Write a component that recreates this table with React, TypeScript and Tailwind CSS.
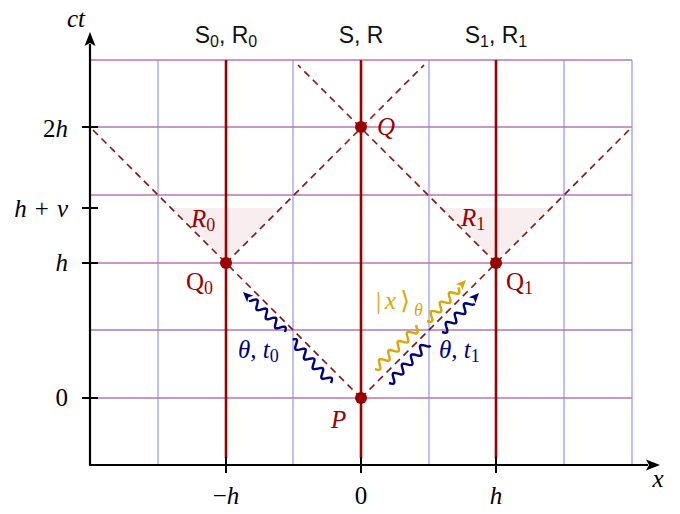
import React from "react";

// spacetime diagram geometry (pixels)
const X0 = 90;
const Y0 = 465;
const gridX = [158, 226, 293, 361, 429, 496, 564, 632];
const gridY = [60, 127, 195, 263, 330, 398];
const worldLines = [226, 361, 496];

const RED = "#990000";
const DASH = "#8b1111";
const NAVY = "#00007a";
const GOLD = "#d9a706";
const MATH = "'Liberation Serif', 'DejaVu Serif', serif";
const SANS = "'Liberation Sans', Arial, sans-serif";

// squiggly photon path between two points
function wave(x1: number, y1: number, x2: number, y2: number, amp = 3.8, len = 13) {
  const dx = x2 - x1;
  const dy = y2 - y1;
  const d = Math.hypot(dx, dy);
  const ux = dx / d;
  const uy = dy / d;
  const nx = -uy;
  const ny = ux;
  const pts: string[] = [];
  const steps = Math.round(d);
  for (let i = 0; i <= steps; i++) {
    const s = (i / steps) * d;
    const o = amp * Math.sin((s / len) * Math.PI * 2);
    pts.push(`${(x1 + ux * s + nx * o).toFixed(2)},${(y1 + uy * s + ny * o).toFixed(2)}`);
  }
  return "M" + pts.join(" L");
}

function head(tx: number, ty: number, fx: number, fy: number, size = 10) {
  const dx = tx - fx;
  const dy = ty - fy;
  const d = Math.hypot(dx, dy);
  const ux = dx / d;
  const uy = dy / d;
  const bx = tx - ux * size;
  const by = ty - uy * size;
  const w = size * 0.45;
  return `M${tx},${ty} L${bx - uy * w},${by + ux * w} L${bx + ux * 2.5},${by + uy * 2.5} L${bx + uy * w},${by - ux * w} Z`;
}

const Photon: React.FC<{ segs: number[][]; tip: number[]; color: string }> = ({ segs, tip, color }) => {
  const last = segs[segs.length - 1];
  return (
    <g>
      {segs.map((s, i) => (
        <path key={i} d={wave(s[0], s[1], s[2], s[3])} fill="none" stroke={color} strokeWidth={2.4} strokeLinejoin="round" />
      ))}
      <path d={head(tip[0], tip[1], last[0], last[1])} fill={color} />
    </g>
  );
};

const Dot: React.FC<{ x: number; y: number }> = ({ x, y }) => <circle cx={x} cy={y} r={6} fill={RED} />;

export default function App() {
  return (
    <div className="w-[680px] h-[514px] bg-white overflow-hidden">
      <svg width={680} height={514} viewBox="0 0 680 514" className="block">
        {/* light cone wedges */}
        <polygon points="172,208 280,208 226,262" fill="#f8eef0" />
        <polygon points="442,208 550,208 496,262" fill="#f8eef0" />

        {/* grid */}
        {gridX.map((x) => (
          <line key={"v" + x} x1={x} y1={60} x2={x} y2={Y0} stroke="#9d9df0" strokeWidth={1.3} />
        ))}
        {gridY.map((y) => (
          <line key={"h" + y} x1={X0} y1={y} x2={632} y2={y} stroke="#b477b4" strokeWidth={1.3} />
        ))}

        {/* world lines */}
        {worldLines.map((x) => (
          <line key={"w" + x} x1={x} y1={60} x2={x} y2={458} stroke={RED} strokeWidth={2.6} />
        ))}

        {/* light rays */}
        <g stroke={DASH} strokeWidth={1.6} strokeDasharray="7 5" fill="none">
          <line x1={361} y1={398} x2={91} y2={128} />
          <line x1={361} y1={398} x2={631} y2={128} />
          <line x1={226} y1={263} x2={424} y2={65} />
          <line x1={496} y1={263} x2={298} y2={65} />
        </g>

        {/* axes */}
        <line x1={X0} y1={Y0} x2={X0} y2={44} stroke="#000" strokeWidth={2.2} />
        <line x1={X0 - 1} y1={Y0} x2={648} y2={Y0} stroke="#000" strokeWidth={2.2} />
        <path d="M90,32 L95.5,46 L90,43 L84.5,46 Z" fill="#000" />
        <path d="M660,465 L646,459.5 L649,465 L646,470.5 Z" fill="#000" />
        {[127, 208, 263, 398].map((y) => (
          <line key={"ty" + y} x1={82} y1={y} x2={98} y2={y} stroke="#000" strokeWidth={2} />
        ))}
        {worldLines.map((x) => (
          <line key={"tx" + x} x1={x} y1={457} x2={x} y2={473} stroke="#000" strokeWidth={2} />
        ))}

        {/* events */}
        <Dot x={226} y={263} />
        <Dot x={361} y={127} />
        <Dot x={496} y={263} />
        <Dot x={361} y={398} />

        {/* photons */}
        <Photon segs={[[331, 383, 292, 340], [285, 332, 251, 299]]} tip={[243, 292]} color={NAVY} />
        <Photon segs={[[375, 369, 418, 327], [427, 321, 459, 288]]} tip={[466, 280]} color={GOLD} />
        <Photon segs={[[389, 383, 428, 343], [442, 332, 472, 301]]} tip={[479, 293]} color={NAVY} />

        {/* axis labels */}
        <g fontFamily={MATH} fontSize={25} fill="#000">
          <text x={76} y={27} textAnchor="middle" fontStyle="italic">ct</text>
          <text x={68} y={137} textAnchor="end">
            2<tspan fontStyle="italic">h</tspan>
          </text>
          <text x={68} y={217} textAnchor="end">
            <tspan fontStyle="italic">h</tspan>
            <tspan dx={8}>+</tspan>
            <tspan dx={8} fontStyle="italic">v</tspan>
          </text>
          <text x={68} y={271} textAnchor="end" fontStyle="italic">h</text>
          <text x={68} y={406} textAnchor="end">0</text>
          <text x={226} y={504} textAnchor="middle">
            −<tspan fontStyle="italic">h</tspan>
          </text>
          <text x={361} y={504} textAnchor="middle">0</text>
          <text x={496} y={504} textAnchor="middle" fontStyle="italic">h</text>
          <text x={658} y={487} textAnchor="middle" fontStyle="italic">x</text>
        </g>

        {/* observer labels */}
        <g fontFamily={SANS} fontSize={23} fill="#111">
          <text x={226} y={43} textAnchor="middle">
            S<tspan fontSize={16} dy={4}>0</tspan>
            <tspan dy={-4}>, R</tspan>
            <tspan fontSize={16} dy={4}>0</tspan>
          </text>
          <text x={361} y={43} textAnchor="middle">S, R</text>
          <text x={496} y={43} textAnchor="middle">
            S<tspan fontSize={16} dy={4}>1</tspan>
            <tspan dy={-4}>, R</tspan>
            <tspan fontSize={16} dy={4}>1</tspan>
          </text>
        </g>

        {/* event labels */}
        <g fontFamily={MATH} fontSize={25} fill={RED}>
          <text x={377} y={135} fontStyle="italic">Q</text>
          <text x={191} y={227} fontStyle="italic">
            R<tspan fontSize={18} dy={4} fontStyle="normal">0</tspan>
          </text>
          <text x={461} y={226} fontStyle="italic">
            R<tspan fontSize={18} dy={4} fontStyle="normal">1</tspan>
          </text>
          <text x={186} y={290}>
            Q<tspan fontSize={18} dy={4}>0</tspan>
          </text>
          <text x={506} y={290}>
            Q<tspan fontSize={18} dy={4}>1</tspan>
          </text>
          <text x={331} y={428} fontStyle="italic">P</text>
        </g>

        {/* photon labels */}
        <g fontFamily={MATH} fontSize={25}>
          <text x={238} y={358} fill={NAVY} fontStyle="italic">
            θ, t<tspan fontSize={18} dy={4} fontStyle="normal">0</tspan>
          </text>
          <text x={439} y={358} fill={NAVY} fontStyle="italic">
            θ, t<tspan fontSize={18} dy={4} fontStyle="normal">1</tspan>
          </text>
          <text x={376} y={309} fill={GOLD}>
            |<tspan dx={4} fontStyle="italic">x</tspan>
            <tspan dx={4}>⟩</tspan>
            <tspan dx={4} fontSize={18} dy={7} fontStyle="italic">θ</tspan>
          </text>
        </g>
      </svg>
    </div>
  );
}
